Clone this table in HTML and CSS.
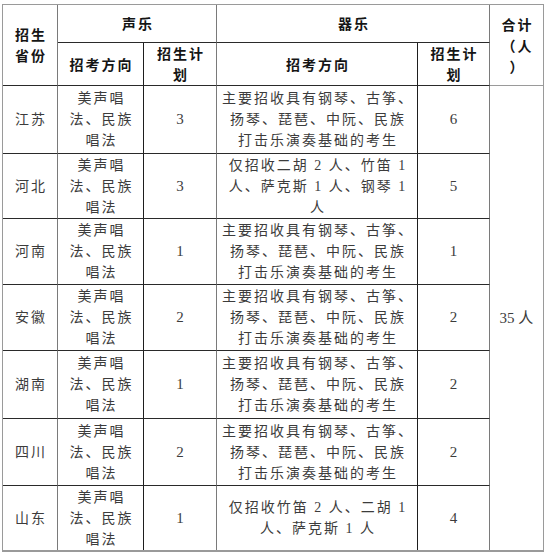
FILE: index.html
```html
<!DOCTYPE html>
<html lang="zh-CN">
<head>
<meta charset="utf-8">
<title>招生计划</title>
<link rel="stylesheet" href="styles.css">
</head>
<body>
<table class="plan">
  <colgroup>
    <col class="w-prov">
    <col class="w-voc">
    <col class="w-num1">
    <col class="w-ins">
    <col class="w-num2">
    <col class="w-tot">
  </colgroup>
  <tr class="h1">
    <td rowspan="2" class="hd vl-grey">招生<br>省份</td>
    <td colspan="2" class="hd vl-grey">声乐</td>
    <td colspan="2" class="hd vl-grey">器乐</td>
    <td rowspan="2" class="hd last">合计<br>（人<br>）</td>
  </tr>
  <tr class="h2">
    <td class="hd vl-dark">招考方向</td>
    <td class="hd vl-grey">招生计<br>划</td>
    <td class="hd vl-dark">招考方向</td>
    <td class="hd vl-grey">招生计<br>划</td>
  </tr>
  <tr class="r68">
    <td class="vl-grey">江苏</td>
    <td class="vl-dark">美声唱<br>法、民族<br>唱法</td>
    <td class="vl-grey num">3</td>
    <td class="vl-dark">主要招收具有钢琴、古筝、<br>扬琴、琵琶、中阮、民族<br>打击乐演奏基础的考生</td>
    <td class="vl-grey num">6</td>
    <td rowspan="7" class="last bottom num">35 人</td>
  </tr>
  <tr class="r65">
    <td class="vl-grey">河北</td>
    <td class="vl-dark">美声唱<br>法、民族<br>唱法</td>
    <td class="vl-grey num">3</td>
    <td class="vl-dark">仅招收二胡 2 人、竹笛 1<br>人、萨克斯 1 人、钢琴 1<br>人</td>
    <td class="vl-grey num">5</td>
  </tr>
  <tr class="r66">
    <td class="vl-grey">河南</td>
    <td class="vl-dark">美声唱<br>法、民族<br>唱法</td>
    <td class="vl-grey num">1</td>
    <td class="vl-dark">主要招收具有钢琴、古筝、<br>扬琴、琵琶、中阮、民族<br>打击乐演奏基础的考生</td>
    <td class="vl-grey num">1</td>
  </tr>
  <tr class="r66">
    <td class="vl-grey">安徽</td>
    <td class="vl-dark">美声唱<br>法、民族<br>唱法</td>
    <td class="vl-grey num">2</td>
    <td class="vl-dark">主要招收具有钢琴、古筝、<br>扬琴、琵琶、中阮、民族<br>打击乐演奏基础的考生</td>
    <td class="vl-grey num">2</td>
  </tr>
  <tr class="r68">
    <td class="vl-grey">湖南</td>
    <td class="vl-dark">美声唱<br>法、民族<br>唱法</td>
    <td class="vl-grey num">1</td>
    <td class="vl-dark">主要招收具有钢琴、古筝、<br>扬琴、琵琶、中阮、民族<br>打击乐演奏基础的考生</td>
    <td class="vl-grey num">2</td>
  </tr>
  <tr class="r67">
    <td class="vl-grey">四川</td>
    <td class="vl-dark">美声唱<br>法、民族<br>唱法</td>
    <td class="vl-grey num">2</td>
    <td class="vl-dark">主要招收具有钢琴、古筝、<br>扬琴、琵琶、中阮、民族<br>打击乐演奏基础的考生</td>
    <td class="vl-grey num">2</td>
  </tr>
  <tr class="r64 lastrow">
    <td class="vl-grey">山东</td>
    <td class="vl-dark">美声唱<br>法、民族<br>唱法</td>
    <td class="vl-grey num">1</td>
    <td class="vl-dark">仅招收竹笛 2 人、二胡 1<br>人、萨克斯 1 人</td>
    <td class="vl-grey num">4</td>
  </tr>
</table>
</body>
</html>
```
FILE: styles.css
```css
html, body {
  margin: 0;
  padding: 0;
  background: #ffffff;
}

.plan {
  margin: 4px 0 0 2px;
  border-collapse: separate;
  border-spacing: 0;
  table-layout: fixed;
  width: 541px;
  border-top: 1px solid #9a9a9a;
  border-left: 1px solid #9a9a9a;
  border-right: 1px solid #9a9a9a;
  border-bottom: 2px solid #9a9a9a;
  font-family: "Liberation Serif", "Noto Sans CJK SC", serif;
  font-size: 14px;
  line-height: 21px;
  letter-spacing: 2px;
  color: #3c3c3c;
}

.w-prov { width: 55px; }
.w-voc { width: 86px; }
.w-num1 { width: 73px; }
.w-ins { width: 201px; }
.w-num2 { width: 72px; }
.w-tot { width: 53px; }

.plan td {
  padding: 0 0 0 2px;
  text-align: center;
  vertical-align: middle;
  border-bottom: 1px solid #2a2a2a;
  white-space: nowrap;
  overflow: hidden;
}

.plan td.vl-grey { border-right: 1px solid #7a7a7a; }
.plan td.vl-dark { border-right: 1px solid #1e1e1e; }
.plan td.last { border-right: none; border-bottom-color: #9a9a9a; }
.plan td.bottom { border-bottom: none; }
.plan tr.lastrow td { border-bottom: none; }

.plan td.hd {
  font-family: "Noto Sans CJK SC", sans-serif;
  font-weight: 700;
  color: #151515;
}

.plan td.num {
  font-size: 15px;
  letter-spacing: 0;
  padding-left: 0;
}

.h1 { height: 38px; }
.h2 { height: 42px; }
.r64 { height: 64px; }
.r65 { height: 65px; }
.r66 { height: 66px; }
.r67 { height: 67px; }
.r68 { height: 68px; }
```
